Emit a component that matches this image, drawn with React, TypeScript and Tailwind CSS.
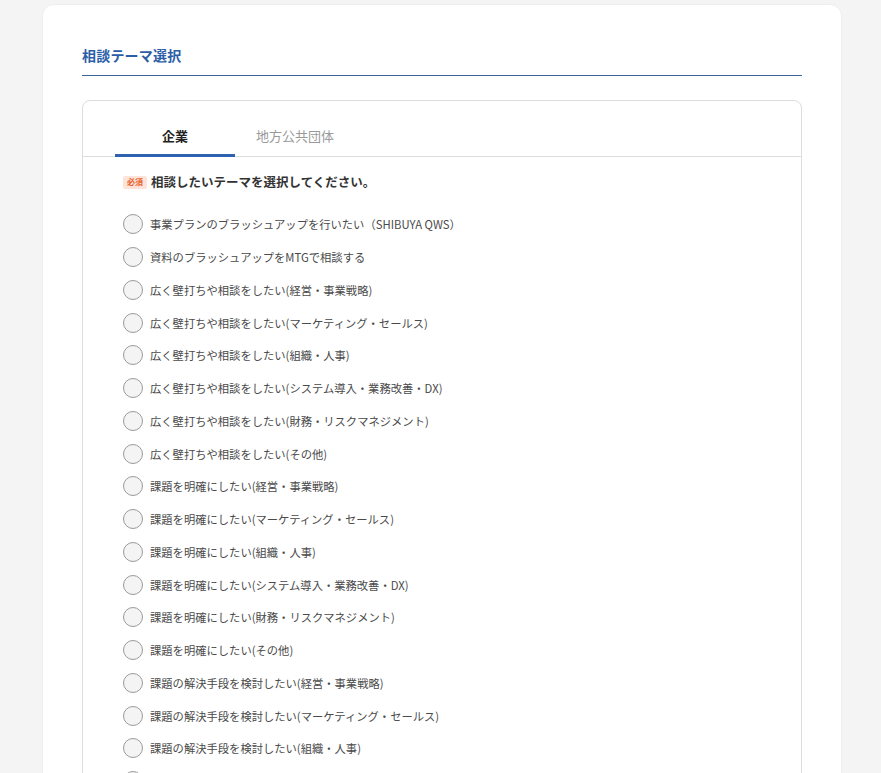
import React from "react";

const items = [
  "事業プランのブラッシュアップを行いたい（SHIBUYA QWS）",
  "資料のブラッシュアップをMTGで相談する",
  "広く壁打ちや相談をしたい(経営・事業戦略)",
  "広く壁打ちや相談をしたい(マーケティング・セールス)",
  "広く壁打ちや相談をしたい(組織・人事)",
  "広く壁打ちや相談をしたい(システム導入・業務改善・DX)",
  "広く壁打ちや相談をしたい(財務・リスクマネジメント)",
  "広く壁打ちや相談をしたい(その他)",
  "課題を明確にしたい(経営・事業戦略)",
  "課題を明確にしたい(マーケティング・セールス)",
  "課題を明確にしたい(組織・人事)",
  "課題を明確にしたい(システム導入・業務改善・DX)",
  "課題を明確にしたい(財務・リスクマネジメント)",
  "課題を明確にしたい(その他)",
  "課題の解決手段を検討したい(経営・事業戦略)",
  "課題の解決手段を検討したい(マーケティング・セールス)",
  "課題の解決手段を検討したい(組織・人事)",
  "課題の解決手段を検討したい(システム導入・業務改善・DX)",
  "課題の解決手段を検討したい(財務・リスクマネジメント)",
];

export default function App() {
  return (
    <div
      className="min-h-screen bg-[#f4f4f4] pt-[4px] pl-[42px] overflow-hidden h-[773px]"
      style={{ fontFamily: '"Noto Sans CJK JP", "Noto Sans", sans-serif' }}
    >
      <div className="w-[800px] bg-white rounded-t-[12px] border border-[#eceff2] px-[39px] pt-[40px] pb-[40px]">
        <h2 className="text-[14px] leading-[20px] font-bold text-[#2c5ea8] pb-[10px] border-b border-[#3a6499] tracking-[0.2px]">
          相談テーマ選択
        </h2>
        <div className="mt-[24px] border border-[#dddddd] rounded-[8px]">
          <div className="flex pl-[32px] border-b border-[#dddddd]">
            <div className="w-[120px] pt-[25px] pb-[8px] text-center text-[13px] leading-[20px] font-bold text-[#222] border-b-[3px] border-[#2f62b0] -mb-px">
              企業
            </div>
            <div className="w-[120px] pt-[25px] pb-[8px] text-center text-[13px] leading-[20px] text-[#999] border-b-[3px] border-transparent -mb-px">
              地方公共団体
            </div>
          </div>
          <div className="px-[40px] pt-[15px]">
            <div className="flex items-center h-[20px]">
              <span className="inline-flex items-center justify-center w-[24px] h-[13px] rounded-[2px] bg-[#fde3d9] text-[#e8602a] text-[8px] leading-none font-bold">
                必須
              </span>
              <span className="ml-[4px] text-[12.5px] leading-[20px] font-bold text-[#333]">
                相談したいテーマを選択してください。
              </span>
            </div>
            <div className="mt-[16px] flex flex-col">
              {items.map((t, i) => (
                <label key={i} className="flex items-center h-[32.75px]">
                  <span className="w-[20px] h-[20px] rounded-full border border-[#9a9a9a] bg-[#f4f4f4] shrink-0" />
                  <span className="ml-[7px] text-[11.3px] leading-[16px] text-[#4a4a4a] whitespace-nowrap">
                    {t}
                  </span>
                </label>
              ))}
            </div>
          </div>
        </div>
      </div>
    </div>
  );
}
